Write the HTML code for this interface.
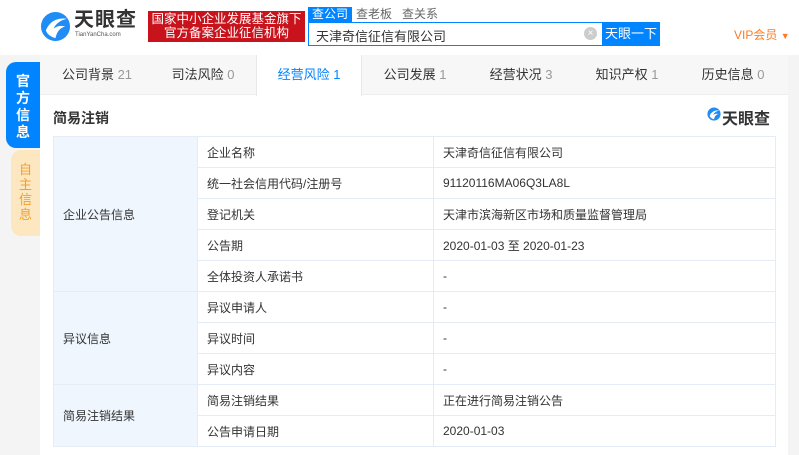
<!DOCTYPE html>
<html><head><meta charset="utf-8"><style>
*{margin:0;padding:0;box-sizing:border-box}
body{width:799px;height:455px;overflow:hidden;background:#f4f4f4;font-family:"Liberation Sans","Noto Sans CJK SC",sans-serif;color:#333;font-size:13px;position:relative}
.hdr{position:absolute;left:0;top:0;width:799px;height:55px;background:#fff}
.abs{position:absolute}
.main{position:absolute;left:40px;top:55px;width:748px;height:400px;background:#fff}
.tabs{position:absolute;left:40px;top:55px;width:748px;height:40px;background:#f7f7f7;border-bottom:1px solid #eee}
.tab{position:absolute;top:0;height:40px;width:106px;line-height:40px;text-align:center;font-size:13px;color:#333}
.tab span{color:#999}
.tab.act{background:#fff;color:#0084ff;border-left:1px solid #e8e8e8;border-right:1px solid #e8e8e8;height:41px}
.tab.act span{color:#0084ff}
table{position:absolute;left:53px;top:136px;border-collapse:collapse;width:723px}
td{border:1px solid #e4ecf5;height:31px;padding-left:9px;font-size:12px;color:#333}
td.k{background:#eff6fe;width:144px}
td.m{width:236px}
</style></head><body>
<div class="hdr"></div>
<svg class="abs" style="left:40px;top:11px" width="31" height="31" viewBox="0 0 32 32"><circle cx="16" cy="16" r="15" fill="#1f8df5"/><path d="M6 20 Q12 6 28 8 Q18 10 14 18 Q20 14 26 16 Q18 18 16 28 Q8 26 6 20Z" fill="#fff"/></svg>
<div class="abs" style="left:74px;top:9px;font-size:20px;font-weight:bold;color:#333;letter-spacing:1px;line-height:22px">天眼查</div>
<div class="abs" style="left:75px;top:32px;font-size:6px;color:#555">TianYanCha.com</div>
<div class="abs" style="left:148px;top:11px;width:157px;height:31px;background:#c9131c;color:#fff;font-size:12.5px;line-height:14px;text-align:center;padding-top:1px">国家中小企业发展基金旗下<br>官方备案企业征信机构</div>
<div class="abs" style="left:308px;top:7px;width:44px;height:15px;background:#0084ff;color:#fff;font-size:12px;line-height:15px;text-align:center">查公司</div>
<div class="abs" style="left:356px;top:7px;font-size:12px;color:#666;line-height:15px">查老板&nbsp;&nbsp;&nbsp;查关系</div>
<div class="abs" style="left:308px;top:22px;width:352px;height:24px;border:1px solid #0084ff;background:#fff"></div>
<div class="abs" style="left:316px;top:26px;font-size:13px">天津奇信征信有限公司</div>
<div class="abs" style="left:584px;top:27px;width:13px;height:13px;border-radius:50%;background:#ccc;color:#fff;font-size:10px;line-height:13px;text-align:center">×</div>
<div class="abs" style="left:602px;top:22px;width:58px;height:24px;background:#0084ff;color:#fff;font-size:13px;line-height:24px;text-align:center">天眼一下</div>
<div class="abs" style="left:734px;top:26px;font-size:12px;color:#ff7a22">VIP会员 <span style="font-size:9px">▼</span></div>
<div class="main"></div>
<div class="tabs">
<div class="tab" style="left:4px">公司背景 <span>21</span></div>
<div class="tab" style="left:110px">司法风险 <span>0</span></div>
<div class="tab act" style="left:216px">经营风险 <span>1</span></div>
<div class="tab" style="left:322px">公司发展 <span>1</span></div>
<div class="tab" style="left:428px">经营状况 <span>3</span></div>
<div class="tab" style="left:534px">知识产权 <span>1</span></div>
<div class="tab" style="left:640px">历史信息 <span>0</span></div>
</div>
<div class="abs" style="left:6px;top:62px;width:34px;height:86px;background:#0084ff;border-radius:10px 0 0 10px;color:#fff;font-size:14px;font-weight:bold;line-height:17px;text-align:center;padding-top:11px">官<br>方<br>信<br>息</div>
<div class="abs" style="left:11px;top:150px;width:29px;height:86px;background:#fde7c0;border-radius:10px 0 0 10px;color:#f0a030;font-size:13px;line-height:15px;text-align:center;padding-top:12px">自<br>主<br>信<br>息</div>
<div class="abs" style="left:53px;top:108px;font-size:14px;font-weight:bold;color:#333">简易注销</div>
<svg class="abs" style="left:707px;top:107px" width="14" height="14" viewBox="0 0 32 32"><circle cx="16" cy="16" r="15" fill="#1f8df5"/><path d="M6 20 Q12 6 28 8 Q18 10 14 18 Q20 14 26 16 Q18 18 16 28 Q8 26 6 20Z" fill="#fff"/></svg>
<div class="abs" style="left:722px;top:105px;font-size:16px;font-weight:bold;color:#333">天眼查</div>
<table>
<tr><td class="k" rowspan="5">企业公告信息</td><td class="m">企业名称</td><td>天津奇信征信有限公司</td></tr>
<tr><td class="m">统一社会信用代码/注册号</td><td>91120116MA06Q3LA8L</td></tr>
<tr><td class="m">登记机关</td><td>天津市滨海新区市场和质量监督管理局</td></tr>
<tr><td class="m">公告期</td><td>2020-01-03 至 2020-01-23</td></tr>
<tr><td class="m">全体投资人承诺书</td><td>-</td></tr>
<tr><td class="k" rowspan="3">异议信息</td><td class="m">异议申请人</td><td>-</td></tr>
<tr><td class="m">异议时间</td><td>-</td></tr>
<tr><td class="m">异议内容</td><td>-</td></tr>
<tr><td class="k" rowspan="2">简易注销结果</td><td class="m">简易注销结果</td><td>正在进行简易注销公告</td></tr>
<tr><td class="m">公告申请日期</td><td>2020-01-03</td></tr>
</table>
</body></html>
